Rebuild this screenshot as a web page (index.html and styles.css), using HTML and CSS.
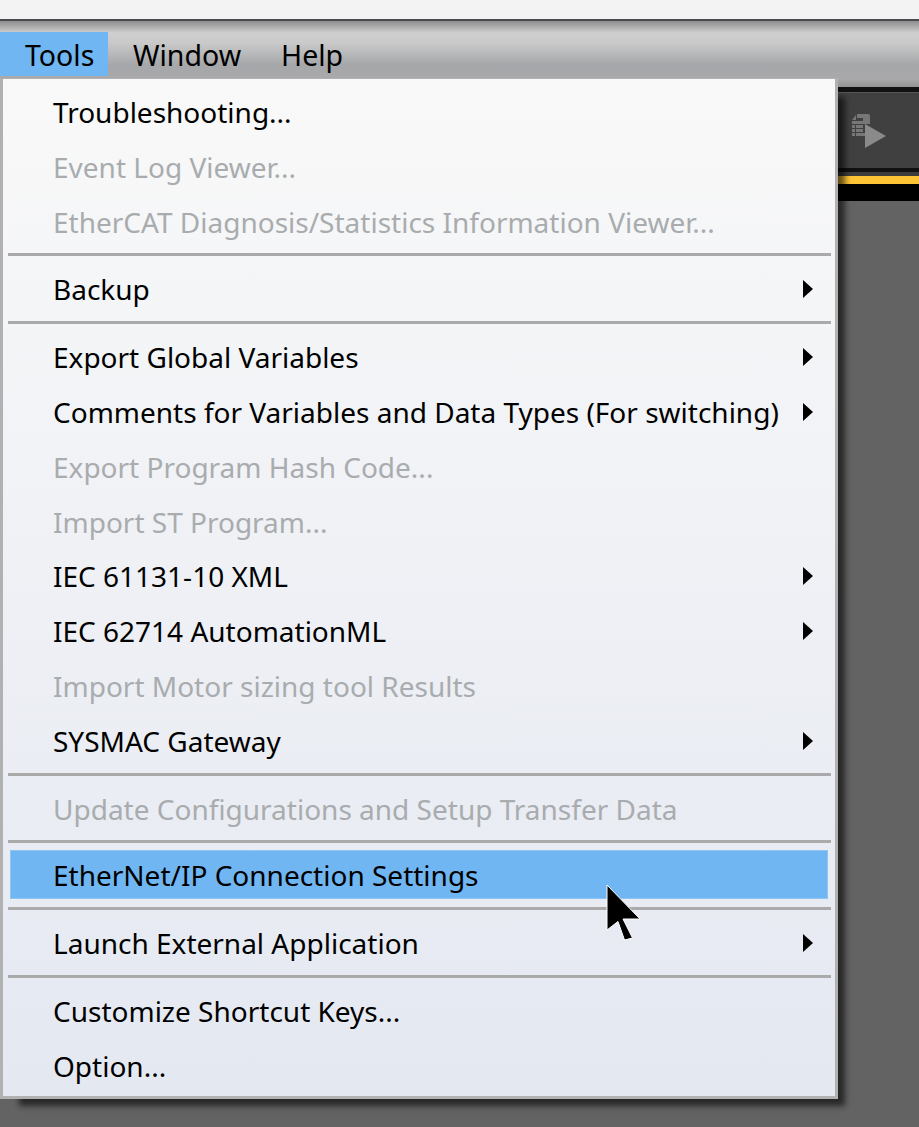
FILE: index.html
```
<!DOCTYPE html>
<html lang="en">
<head>
<meta charset="utf-8">
<title>Tools menu</title>
<link rel="stylesheet" href="styles.css">
</head>
<body>
<div class="app">
  <div class="titlebar"></div>
  <nav class="menubar">
    <span class="menubar-item active">Tools</span>
    <span class="menubar-item">Window</span>
    <span class="menubar-item">Help</span>
  </nav>
  <div class="toolbar">
    <svg class="tool-icon" width="36" height="38" viewBox="0 0 36 38">
      <path fill="#777" d="M6 1h11a2 2 0 0 1 2 2v8h-7V5H6zM1 7l4-5v5z"/>
      <path fill="#777" d="M1 8h11v3h-11zM1 12h3v3H1zM5 12h7v3H5zM1 16h3v3H1zM5 16h7v3H5zM1 20h3v3H1zM5 20h9v3H5z"/>
      <path fill="#8a8a8a" d="M14 11l21 12-21 12z"/>
    </svg>
  </div>
  <div class="accent"></div>
  <div class="blackbar"></div>
  <div class="workspace"></div>

  <div class="menu">
    <div class="row">Troubleshooting...</div>
    <div class="row off">Event Log Viewer...</div>
    <div class="row off">EtherCAT Diagnosis/Statistics Information Viewer...</div>
    <div class="sep"></div>
    <div class="row sub">Backup</div>
    <div class="sep"></div>
    <div class="row sub">Export Global Variables</div>
    <div class="row sub">Comments for Variables and Data Types (For switching)</div>
    <div class="row off">Export Program Hash Code...</div>
    <div class="row off">Import ST Program...</div>
    <div class="row sub">IEC 61131-10 XML</div>
    <div class="row sub">IEC 62714 AutomationML</div>
    <div class="row off">Import Motor sizing tool Results</div>
    <div class="row sub">SYSMAC Gateway</div>
    <div class="sep"></div>
    <div class="row off">Update Configurations and Setup Transfer Data</div>
    <div class="sep"></div>
    <div class="row hot">EtherNet/IP Connection Settings</div>
    <div class="sep"></div>
    <div class="row sub">Launch External Application</div>
    <div class="sep"></div>
    <div class="row">Customize Shortcut Keys...</div>
    <div class="row">Option...</div>
  </div>

  <svg class="cursor" width="36" height="58" viewBox="0 0 36 58">
    <path fill="#000" stroke="#fff" stroke-width="1" d="M1 1V46L12 37.5 18.500 56 26.500 54 17 35H34z"/>
  </svg>
</div>
</body>
</html>
```
FILE: styles.css
```
* { box-sizing: border-box; }
html, body { margin: 0; height: 100%; overflow: hidden; }
body { font-family: "Noto Sans", "Open Sans", sans-serif; }
.app { position: relative; width: 919px; height: 1127px; display: flex; flex-direction: column; background: #636364; }
.titlebar { height: 19px; flex: none; background: #f3f3f3; }
.menubar {
  height: 68px; flex: none; display: flex; padding-top: 11px; align-items: flex-start;
  border-top: 2px solid #4a4a4e;
  background: linear-gradient(#8e8e90 0, #cfcfcf 12px, #c9c9c9 22px, #a6a7aa 44px, #a9a9ab 58px, #8f8f90 68px);
}
.menubar-item { height: 44px; line-height: 46px; font-size: 28.5px; color: #000; padding: 0 25px; white-space: nowrap; }
.menubar-item + .menubar-item { padding-left: 0; padding-right: 40px; }
.menubar-item.active { background: #70b6f3; width: 108px; margin-right: 25px; }
.toolbar {
  height: 85px; flex: none; background: #404040; display: flex; justify-content: flex-end;
  align-items: flex-start; padding: 21px 32px 0 0;
  border-top: 5px solid #111; border-bottom: 4px solid #111;
  box-shadow: inset 0 1px 0 #555;
}
.tool-icon { display: block; }
.accent { height: 12px; flex: none; background: #fdc435; border-top: 4px solid #3c3c3c; }
.blackbar { height: 17px; flex: none; background: #000; }
.workspace { flex: 1; background: #636364; }

.menu {
  position: absolute; left: 0; top: 78px; width: 838px; height: 1021px;
  padding: 6px 0 0 0;
  border: solid #b1b1b1;
  border-width: 1px 3px 3px 3px;
  background: linear-gradient(#f9f9f9, #e4e8f1);
  box-shadow: 13px 13px 6px -6px rgba(0,0,0,.6);
  font-size: 28px; color: #000;
}
.row { height: 54.8px; line-height: 54.8px; padding-left: 50px; white-space: nowrap; position: relative; }
.off { color: #a9acae; }
.sub::after {
  content: ""; position: absolute; left: 800px; top: 18px;
  border-left: 10px solid #000; border-top: 9px solid transparent; border-bottom: 9px solid transparent;
}
.sep { height: 13px; position: relative; }
.sep::before { content: ""; position: absolute; left: 5px; right: 4px; top: 4px; height: 3px; background: #aaa; }
.hot { background: #70b6f3; margin: 1px 7px 4px; padding-left: 42px; height: 49px; line-height: 49px; border: 1px solid #8ec5f5; }
.cursor { position: absolute; left: 606px; top: 884px; }
```
